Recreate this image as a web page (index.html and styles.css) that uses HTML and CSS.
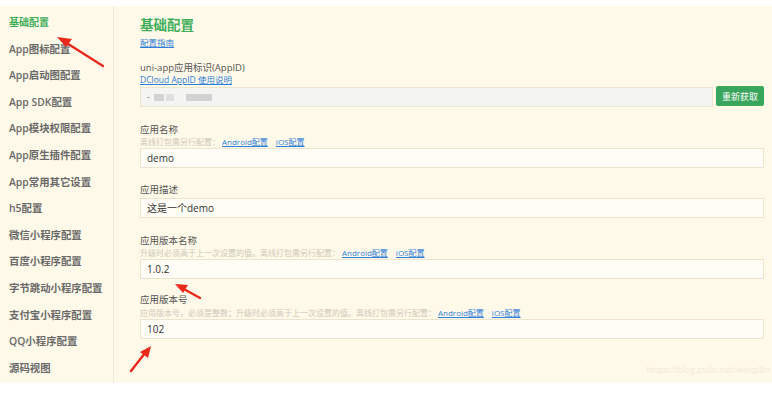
FILE: index.html
```html
<!DOCTYPE html>
<html lang="zh">
<head>
<meta charset="utf-8">
<link rel="stylesheet" href="styles.css">
</head>
<body>
<div class="page">
  <nav class="side">
    <div class="item active">基础配置</div>
    <div class="item">App图标配置</div>
    <div class="item">App启动图配置</div>
    <div class="item">App SDK配置</div>
    <div class="item">App模块权限配置</div>
    <div class="item">App原生插件配置</div>
    <div class="item">App常用其它设置</div>
    <div class="item">h5配置</div>
    <div class="item">微信小程序配置</div>
    <div class="item">百度小程序配置</div>
    <div class="item">字节跳动小程序配置</div>
    <div class="item">支付宝小程序配置</div>
    <div class="item">QQ小程序配置</div>
    <div class="item">源码视图</div>
  </nav>
  <main class="main">
    <h1 class="title">基础配置</h1>
    <a class="guide">配置指南</a>

    <div class="field f-appid">
      <div class="label">uni-app应用标识(AppID)</div>
      <a class="sublink">DCloud AppID 使用说明</a>
      <div class="row">
        <div class="input disabled"><span class="dash">-</span><span class="blur b1"></span><span class="blur b2"></span><span class="blur b3"></span></div>
        <button class="btn">重新获取</button>
      </div>
    </div>

    <div class="field f-name">
      <div class="label">应用名称</div>
      <div class="hint">离线打包需另行配置：<a>Android配置</a><a>iOS配置</a></div>
      <div class="input">demo</div>
    </div>

    <div class="field f-desc">
      <div class="label gap">应用描述</div>
      <div class="input">这是一个demo</div>
    </div>

    <div class="field f-vname">
      <div class="label">应用版本名称</div>
      <div class="hint">升级时必须高于上一次设置的值。离线打包需另行配置：<a>Android配置</a><a>iOS配置</a></div>
      <div class="input">1.0.2</div>
    </div>

    <div class="field f-vcode">
      <div class="label">应用版本号</div>
      <div class="hint">应用版本号，必须是整数；升级时必须高于上一次设置的值。离线打包需另行配置：<a>Android配置</a><a>iOS配置</a></div>
      <div class="input">102</div>
    </div>

    <div class="watermark">https://blog.csdn.net/weiqiBn</div>
  </main>

  <svg class="arrow a1" width="60" height="40" viewBox="0 0 60 40">
    <path d="M50 32 L12 8" stroke="#e8291c" stroke-width="2.4" fill="none" stroke-linecap="round"/>
    <path d="M4 3 L19 5 L13 13 Z" fill="#e8291c"/>
  </svg>
  <svg class="arrow a2" width="40" height="24" viewBox="0 0 40 24">
    <path d="M28 17 L10 7" stroke="#e8291c" stroke-width="2.4" fill="none" stroke-linecap="round"/>
    <path d="M3 3 L16 4 L11 12 Z" fill="#e8291c"/>
  </svg>
  <svg class="arrow a3" width="30" height="30" viewBox="0 0 30 30">
    <path d="M4 27 L18 9" stroke="#e8291c" stroke-width="2.4" fill="none" stroke-linecap="round"/>
    <path d="M24 2 L13 8 L21 14 Z" fill="#e8291c"/>
  </svg>
</div>
</body>
</html>
```

FILE: styles.css
```css
html, body {
  margin: 0;
  padding: 0;
  background: #ffffff;
}
body {
  font-family: "Open Sans", "Noto Sans CJK SC", sans-serif;
  color: #555;
}
.page {
  position: relative;
  margin-top: 6px;
  height: 377px;
  background: #fef9e8;
  display: flex;
}
.side {
  width: 114px;
  border-right: 1px solid #f1ead6;
  padding-top: 3px;
  box-sizing: border-box;
  flex: none;
}
.item {
  height: 26.6px;
  line-height: 26.6px;
  padding-left: 9px;
  font-size: 10.4px;
  font-weight: 600;
  color: #6a6a6a;
  white-space: nowrap;
}
.item.active {
  font-size: 10px;
  color: #3fae5a;
}
.main {
  flex: 1;
  padding: 9px 8px 0 26px;
  position: relative;
}
.title {
  margin: 0;
  font-size: 13.5px;
  line-height: 20px;
  font-weight: 700;
  color: #3fae5a;
}
.guide, .sublink, .hint a {
  color: #2f7fd8;
  text-decoration: underline;
}
.guide {
  display: block;
  margin-top: 2px;
  font-size: 8.5px;
  line-height: 12px;
  width: max-content;
}
.label {
  font-size: 9.5px;
  line-height: 12px;
  color: #555;
}
.sublink {
  display: block;
  font-size: 8.5px;
  line-height: 12px;
  width: max-content;
}
.hint {
  font-size: 8px;
  line-height: 12px;
  color: #cfc8b8;
}
.hint a {
  font-size: 8px;
  margin-left: 2px;
  margin-right: 6px;
}
.input {
  box-sizing: border-box;
  height: 20px;
  border: 1px solid #ece4cd;
  background: #fffdf6;
  font-size: 10px;
  line-height: 18px;
  padding-left: 6px;
  color: #333;
}
.input.disabled {
  background: #f4f4f2;
  flex: 1;
  display: flex;
  align-items: center;
}
.row {
  display: flex;
  gap: 3px;
  margin-top: 1px;
  align-items: flex-start;
}
.dash {
  color: #777;
  margin-right: 4px;
  font-size: 9px;
}
.blur {
  display: inline-block;
  height: 7px;
  background: #c9c9c9;
  opacity: 0.8;
}
.b1 { width: 10px; margin-right: 2px; }
.b2 { width: 8px; margin-right: 12px; background: #dadada; }
.b3 { width: 26px; }
.btn {
  height: 20px;
  width: 48px;
  margin-top: -1px;
  border: none;
  border-radius: 2px;
  background: #3aa55c;
  color: #fff;
  font-family: "Noto Sans CJK SC", sans-serif;
  font-size: 9px;
  padding: 0;
  flex: none;
}
.f-appid { margin-top: 13px; }
.f-name { margin-top: 17px; }
.f-desc { margin-top: 16px; }
.f-desc .label { margin-bottom: 2px; }
.f-vname { margin-top: 17px; }
.f-vcode { margin-top: 15px; }
.f-vcode .hint { margin-top: 1px; }
.watermark {
  position: absolute;
  right: 2px;
  bottom: 7px;
  font-size: 9px;
  color: #f1ead8;
  white-space: nowrap;
}
.arrow {
  position: absolute;
}
.a1 { left: 53px; top: 28px; }
.a2 { left: 172px; top: 275px; }
.a3 { left: 127px; top: 338px; }
```
